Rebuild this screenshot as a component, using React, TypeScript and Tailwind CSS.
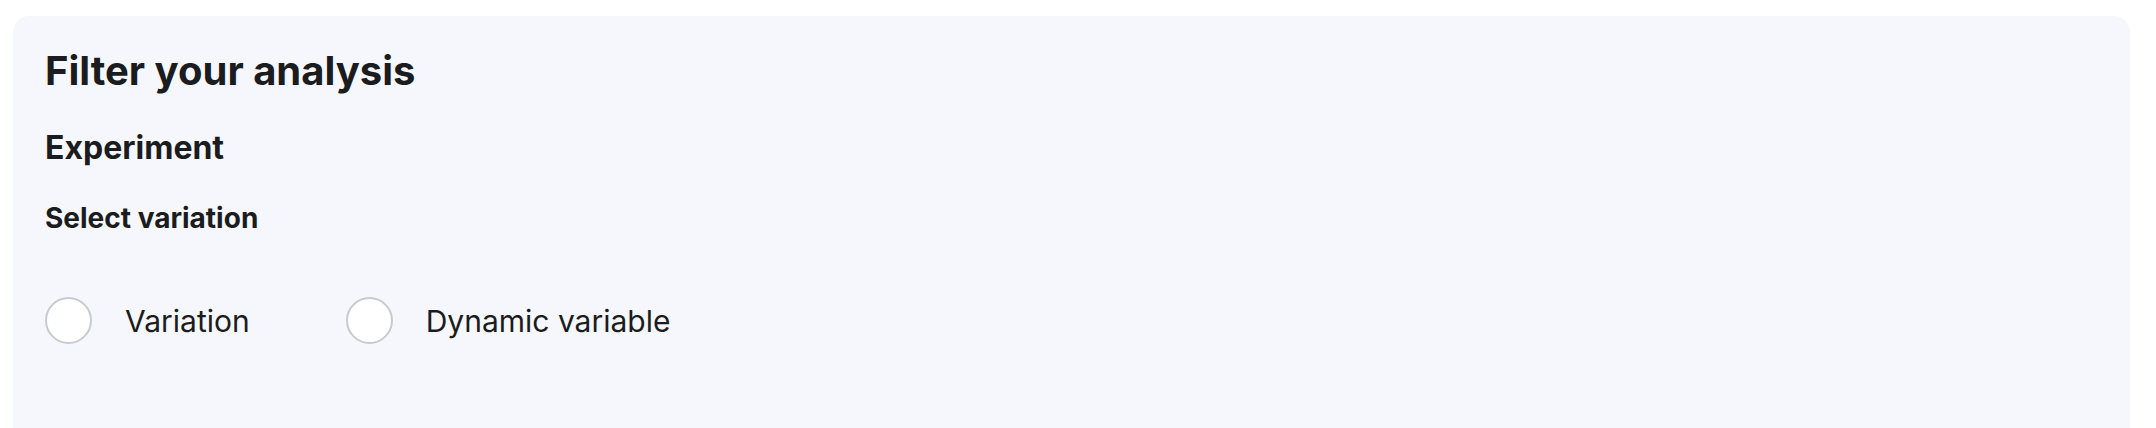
import React from "react";

const font = { fontFamily: "Inter, 'Noto Sans', sans-serif" };

function Radio({ label }: { label: string }) {
  return (
    <label className="flex items-center gap-[33px] cursor-pointer">
      <span className="block w-[47px] h-[47px] rounded-full bg-white border-2 border-[#c9cacf]" />
      <span className="text-[30px] leading-[36px] text-[#1b1c20]">{label}</span>
    </label>
  );
}

export default function App() {
  return (
    <div className="min-h-[428px] bg-white pt-[16px] pl-[13px] pr-[26px]" style={font}>
      <section className="h-[520px] rounded-[16px] bg-[#f6f7fc] px-[32px] pt-[31px]">
        <h1 className="text-[40px] leading-[48px] font-bold text-[#1b1c20]">
          Filter your analysis
        </h1>
        <h2 className="mt-[34px] text-[32px] leading-[38px] font-bold text-[#1b1c20]">
          Experiment
        </h2>
        <h3 className="mt-[34px] text-[28px] leading-[34px] font-bold text-[#1b1c20]">
          Select variation
        </h3>
        <div className="mt-[62px] flex items-center gap-[96px]">
          <Radio label="Variation" />
          <Radio label="Dynamic variable" />
        </div>
      </section>
    </div>
  );
}
